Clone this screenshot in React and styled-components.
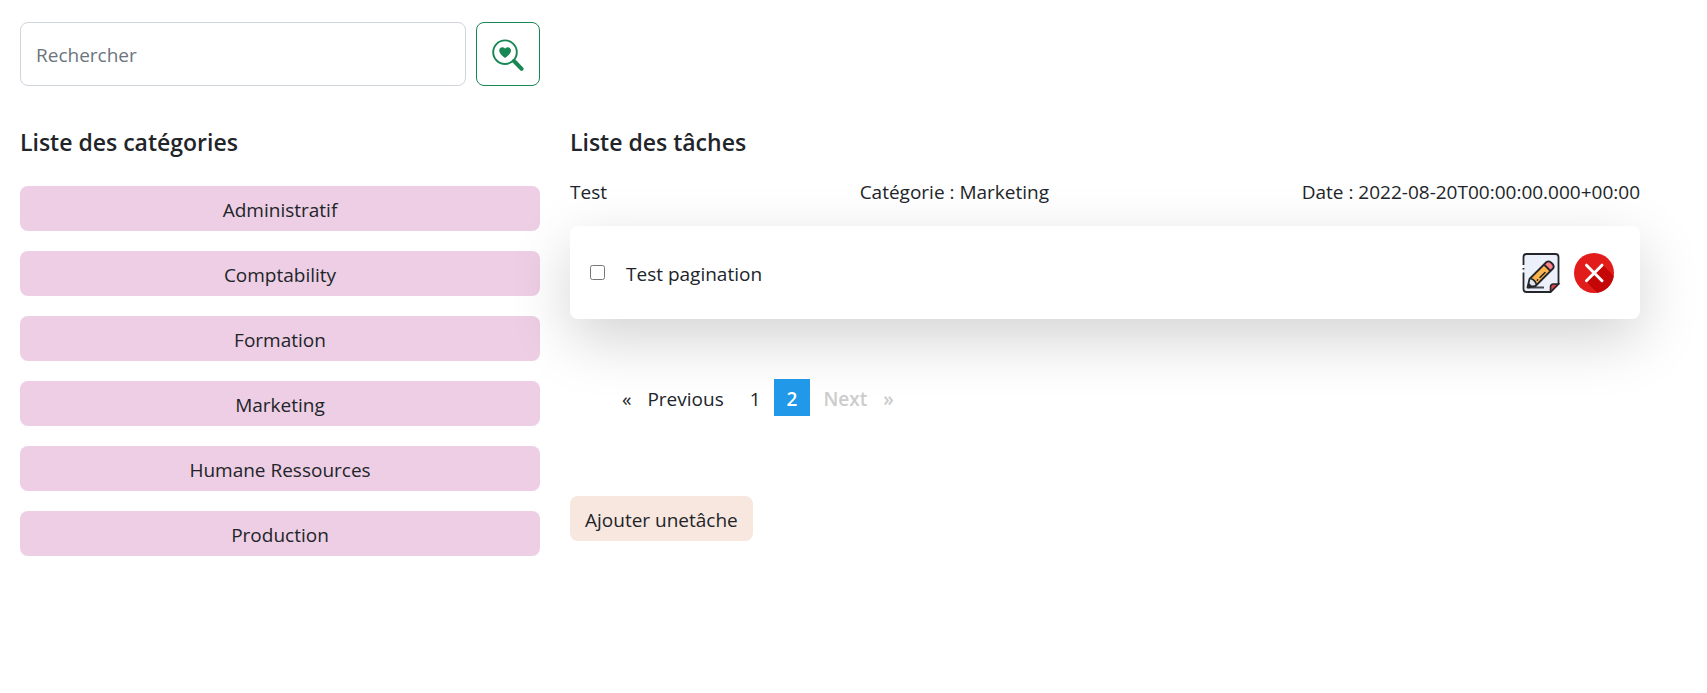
import React from "react";
import styled, { createGlobalStyle } from "styled-components";

const GlobalStyle = createGlobalStyle`
  *, *::before, *::after { box-sizing: border-box; }
  body {
    margin: 0;
    background: #fff;
    color: #212529;
    font-family: "Segoe UI", "Open Sans", "Noto Sans", sans-serif;
    font-size: 19px;
    line-height: 30px;
  }
  button, input { font: inherit; color: inherit; }
`;

const Page = styled.div`
  display: grid;
  grid-template-columns: minmax(0, 52fr) minmax(0, 107fr);
  column-gap: 30px;
  row-gap: 41px;
  padding: 22px 67px 22px 20px;
`;

const SearchForm = styled.form`
  display: flex;
  gap: 10px;
`;

const SearchInput = styled.input`
  flex: 1;
  min-width: 0;
  height: 64px;
  padding: 2px 15px 0;
  border: 1px solid #ced4da;
  border-radius: 8px;
  background: #fff;
  &::placeholder { color: #6c757d; opacity: 1; }
`;

const SearchButton = styled.button`
  display: flex;
  align-items: center;
  justify-content: center;
  width: 64px;
  height: 64px;
  padding: 0;
  border: 1px solid #198754;
  border-radius: 8px;
  background: #fff;
  color: #198754;
  cursor: pointer;
`;

const Sidebar = styled.nav`
  grid-column: 1;
`;

const Main = styled.main`
  grid-column: 2;
`;

const Title = styled.h2`
  margin: 0;
  font-size: 23px;
  font-weight: 600;
  line-height: 30px;
`;

const CategoryList = styled.ul`
  display: grid;
  gap: 20px;
  margin: 29px 0 0;
  padding: 0;
  list-style: none;
`;

const Button = styled.button`
  display: block;
  width: ${(p) => (p.$block ? "100%" : "auto")};
  height: 45px;
  padding: 2px 15px 0;
  border: 0;
  border-radius: 8px;
  background: ${(p) => (p.$block ? "#eecee4" : "#f8e7df")};
  cursor: pointer;
`;

const TaskInfo = styled.div`
  display: flex;
  justify-content: space-between;
  margin: 20px 0 19px;
`;

const TaskCard = styled.div`
  display: flex;
  align-items: center;
  justify-content: space-between;
  height: 93px;
  padding: 0 26px 0 20px;
  border-radius: 8px;
  background: #fff;
  box-shadow: 0 20px 60px rgba(0, 0, 0, 0.175);
`;

const TaskLabel = styled.label`
  display: flex;
  align-items: center;
  gap: 21px;
`;

const TaskName = styled.span`
  padding-top: 2px;
`;

const Checkbox = styled.input`
  width: 15px;
  height: 15px;
  margin: 0;
`;

const Actions = styled.div`
  display: flex;
  gap: 13px;
`;

const IconButton = styled.button`
  display: block;
  padding: 0;
  border: 0;
  background: none;
  cursor: pointer;
  svg { display: block; }
`;

const Pagination = styled.ul`
  display: flex;
  margin: 60px 0 80px;
  padding: 0 0 0 39px;
  list-style: none;
`;

const PageLink = styled.a`
  display: flex;
  gap: 16px;
  padding: 5px 13px 2px;
  color: ${(p) => (p.$active ? "#fff" : p.$disabled ? "#ccc" : "inherit")};
  background: ${(p) => (p.$active ? "#2199e8" : "transparent")};
  font-weight: ${(p) => (p.$active || p.$disabled ? 600 : 400)};
  text-decoration: none;
`;

const SearchHeartIcon = () => (
  <svg width="32" height="34" viewBox="0 0 32 34" fill="none" aria-hidden="true">
    <circle cx="13" cy="15.2" r="11.8" stroke="currentColor" strokeWidth="1.9" />
    <path d="M22 24l7.6 7.8" stroke="currentColor" strokeWidth="4" strokeLinecap="round" />
    <path
      d="M13.1 21C9 18.2 7.2 16 7.2 13.6c0-3.6 4.2-4.4 5.9-1.8 1.7-2.6 5.9-1.8 5.9 1.8 0 2.4-1.8 4.6-5.9 7.4z"
      fill="currentColor"
    />
  </svg>
);

const EditIcon = () => (
  <svg width="40" height="40" viewBox="0 0 40 40" fill="none" aria-hidden="true">
    <path d="M5 1h30q3 0 3 3v27l-8 8H5q-3 0-3-3V4q0-3 3-3z" fill="#ebf0fa" />
    <path
      d="M2.5 12V4q0-3 3-3h29q3 0 3 3v27l-8 8h-24q-3 0-3-3V19.5M2.5 15v1.5"
      stroke="#24262a"
      strokeWidth="1.8"
    />
    <path d="M29.5 39v-5q0-3 3-3h5z" fill="#e4404d" stroke="#24262a" strokeWidth="1.6" />
    <path d="M7 34.5h16" stroke="#454950" strokeWidth="2" />
    <path d="M6.5 34.5l2-8.5L23 11.5l6.500 6.500L15 32.500z" fill="#fdb44b" />
    <path d="M6.5 34.5l2-8.5 1.5-1.3q4 1.300 6 6.800L14 33z" fill="#dfe4ee" />
    <path d="M23 11.5l2.5-2.5q2-1.5 4.500.5l2 2q1.500 2.500 0 4l-2.500 2.500z" fill="#ff8086" />
    <path
      d="M6.5 34.5l2-8.5L25.5 9q2-1.5 4.500.5l2 2q1.500 2.500 0 4L14.500 33zM23 11.500l6.500 6.500M9.500 25.500q5 1.500 6 6.500"
      stroke="#24262a"
      strokeWidth="1.8"
      strokeLinejoin="round"
    />
    <path d="M6.5 34.5l1-5 4 4z" fill="#24262a" />
    <path d="M19 24.5l5-5M16.3 27.2l.4-.4" stroke="#24262a" strokeWidth="1.6" strokeLinecap="round" />
  </svg>
);

const DeleteIcon = () => (
  <svg width="40" height="40" viewBox="0 0 40 40" fill="none" aria-hidden="true">
    <circle cx="20" cy="20" r="20" fill="#e21b1b" />
    <path d="M28.5 11.5L39.7 23A20 20 0 0 1 23.3 39.700L12 28.500z" fill="#c40606" />
    <path d="M12.5 12.200l15.500 15.500M28 12.200L12.500 27.700" stroke="#fff" strokeWidth="3" strokeLinecap="round" />
  </svg>
);

const categories = [
  "Administratif",
  "Comptability",
  "Formation",
  "Marketing",
  "Humane Ressources",
  "Production",
];

export default function App() {
  return (
    <>
      <GlobalStyle />
      <Page>
        <SearchForm role="search" onSubmit={(e) => e.preventDefault()}>
          <SearchInput type="text" placeholder="Rechercher" aria-label="Rechercher" />
          <SearchButton type="submit" aria-label="Lancer la recherche">
            <SearchHeartIcon />
          </SearchButton>
        </SearchForm>

        <Sidebar>
          <Title>Liste des catégories</Title>
          <CategoryList>
            {categories.map((name) => (
              <li key={name}>
                <Button type="button" $block>{name}</Button>
              </li>
            ))}
          </CategoryList>
        </Sidebar>

        <Main>
          <Title>Liste des tâches</Title>
          <TaskInfo>
            <span>Test</span>
            <span>Catégorie : Marketing</span>
            <span>Date : 2022-08-20T00:00:00.000+00:00</span>
          </TaskInfo>
          <TaskCard>
            <TaskLabel>
              <Checkbox type="checkbox" />
              <TaskName>Test pagination</TaskName>
            </TaskLabel>
            <Actions>
              <IconButton type="button" aria-label="Modifier"><EditIcon /></IconButton>
              <IconButton type="button" aria-label="Supprimer"><DeleteIcon /></IconButton>
            </Actions>
          </TaskCard>
          <Pagination aria-label="Pagination">
            <li><PageLink href="#1"><span>«</span><span>Previous</span></PageLink></li>
            <li><PageLink href="#1">1</PageLink></li>
            <li><PageLink href="#2" $active aria-current="page">2</PageLink></li>
            <li><PageLink href="#2" $disabled aria-disabled="true"><span>Next</span><span>»</span></PageLink></li>
          </Pagination>
          <Button type="button">Ajouter unetâche</Button>
        </Main>
      </Page>
    </>
  );
}
